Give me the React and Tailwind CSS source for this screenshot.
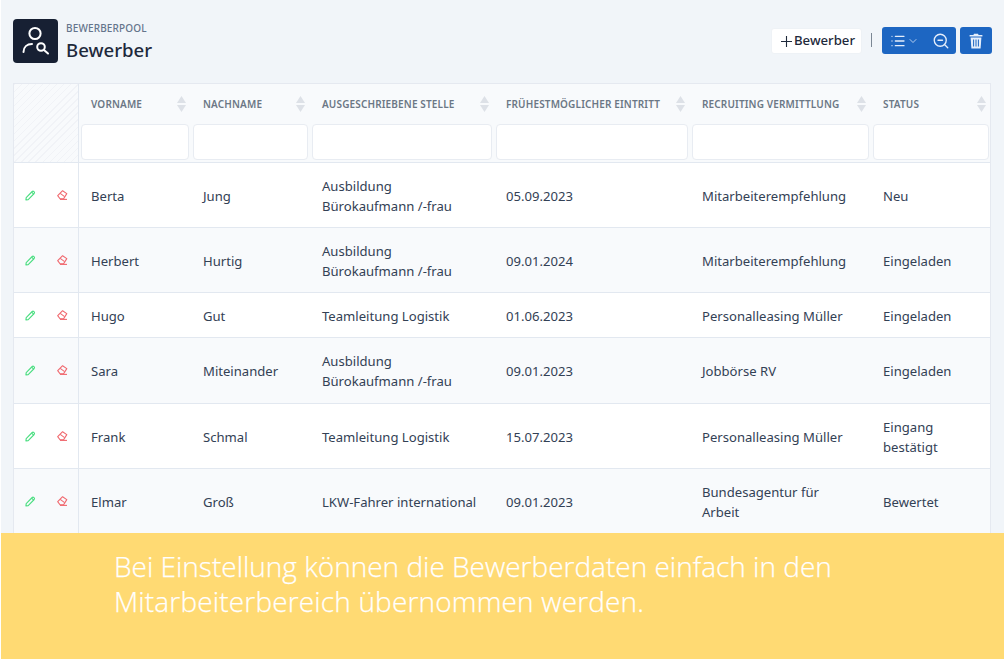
import React from "react";
import { List, ChevronDown, ZoomOut } from "lucide-react";

const cols = "grid grid-cols-[65px_112px_119px_184px_196px_181px_120px]";
const headers = ["VORNAME", "NACHNAME", "AUSGESCHRIEBENE STELLE", "FRÜHESTMÖGLICHER EINTRITT", "RECRUITING VERMITTLUNG", "STATUS"];
const rows = [
  { h: "h-[65px]", c: [["Berta"], ["Jung"], ["Ausbildung", "Bürokaufmann /-frau"], ["05.09.2023"], ["Mitarbeiterempfehlung"], ["Neu"]] },
  { h: "h-[65px]", alt: true, c: [["Herbert"], ["Hurtig"], ["Ausbildung", "Bürokaufmann /-frau"], ["09.01.2024"], ["Mitarbeiterempfehlung"], ["Eingeladen"]] },
  { h: "h-[45px]", c: [["Hugo"], ["Gut"], ["Teamleitung Logistik"], ["01.06.2023"], ["Personalleasing Müller"], ["Eingeladen"]] },
  { h: "h-[66px]", alt: true, c: [["Sara"], ["Miteinander"], ["Ausbildung", "Bürokaufmann /-frau"], ["09.01.2023"], ["Jobbörse RV"], ["Eingeladen"]] },
  { h: "h-[65px]", c: [["Frank"], ["Schmal"], ["Teamleitung Logistik"], ["15.07.2023"], ["Personalleasing Müller"], ["Eingang", "bestätigt"]] },
  { h: "h-[64px]", alt: true, c: [["Elmar"], ["Groß"], ["LKW-Fahrer international"], ["09.01.2023"], ["Bundesagentur für", "Arbeit"], ["Bewertet"]] },
];

const Sort = () => (
  <svg width="9" height="16" viewBox="0 0 9 16" className="shrink-0">
    <path d="M4.5 0 L9 7 H0 Z" fill="#dde1e7" />
    <path d="M4.5 16 L9 9 H0 Z" fill="#dde1e7" />
  </svg>
);

const PencilIcon = () => (
  <svg width="11" height="11" viewBox="0 0 11 11" fill="none" stroke="#4ade80" strokeWidth="1.1">
    <path d="M1.2 7.6 L7.2 1.5 Q8 .8 9 1.6 Q10 2.6 9.2 3.5 L3.2 9.6 L.9 10 Z" strokeLinejoin="round" />
    <path d="M6.6 2.2 L8.7 4.2" />
  </svg>
);

const EraserIcon = () => (
  <svg width="11" height="11" viewBox="0 0 11 11" fill="none" stroke="#f0696f" strokeWidth="1.1" strokeLinejoin="round">
    <path d="M.7 5.6 L5.6 .7 L9.8 3.6 L6.6 8.8 L3 8.8 Z" />
    <path d="M3.2 3.4 L7.6 6.6" />
    <path d="M3 9.4 H10" />
  </svg>
);

const UserSearch = () => (
  <svg width="30" height="30" viewBox="0 0 30 30" fill="none" stroke="white" strokeWidth="2" strokeLinecap="round">
    <circle cx="14" cy="7.5" r="5.6" />
    <path d="M2.5 26 C2.5 21 6 18 11 18" />
    <circle cx="20" cy="21" r="3.8" />
    <path d="M23 24 L27 27.5" />
  </svg>
);

const TrashIcon = () => (
  <svg width="14" height="16" viewBox="0 0 14 16">
    <path d="M5 0.7 H9 L9.6 2 H13.4 V3.6 H.6 V2 H4.4 Z" fill="#e5eefb" />
    <path d="M1.6 4.6 H12.4 L11.6 15.4 H2.4 Z" fill="#e5eefb" />
    <path d="M4.6 6.5 V13.5 M7 6.5 V13.5 M9.4 6.5 V13.5" stroke="#1d66c2" strokeWidth="1" />
  </svg>
);

export default function App() {
  return (
    <div className="w-[1004px] h-[661px] overflow-hidden bg-white font-['Noto_Sans','Open_Sans',sans-serif]">
      <div className="bg-[#f1f5f9] ml-px pt-[19px] pl-[12px] pr-[12px]">
        <div className="flex items-start h-[64px]">
          <div className="w-[45px] h-[44px] rounded-[4px] bg-[#172033] flex items-center justify-center">
            <UserSearch />
          </div>
          <div className="ml-[8px] flex flex-col">
            <div className="text-[10px] leading-[18px] font-medium text-[#64748b] tracking-[0.15px]">BEWERBERPOOL</div>
            <div className="text-[18.6px] leading-[26px] font-medium text-[#1e293b]">Bewerber</div>
          </div>
          <div className="ml-auto flex items-center mt-[8px]">
            <button className="h-[26px] w-[91px] mt-[1px] pl-[3px] bg-white rounded-[3px] text-[13.2px] font-medium text-[#1e293b] flex items-center justify-center border border-[#eef2f6]">
              <svg width="11" height="11" viewBox="0 0 11 11" stroke="#1e293b" strokeWidth="1.1" className="mr-[2px] mt-px"><path d="M5.5 0 V11 M0 5.5 H11" /></svg>
              Bewerber
            </button>
            <div className="w-px h-[14px] bg-[#7b8794] ml-[9px] mr-[10px] -mt-[1px]"></div>
            <div className="w-[74px] h-[27px] bg-[#1d66c2] rounded-[3px] flex items-center pl-[8px] text-[#e5eefb]">
              <List size={16} strokeWidth={1.9} />
              <ChevronDown size={12} strokeWidth={1.5} className="ml-[1px]" />
              <ZoomOut size={18} strokeWidth={1.8} className="ml-[13px]" />
            </div>
            <div className="w-[32px] h-[27px] bg-[#1d66c2] rounded-[3px] ml-[4px] flex items-center justify-center">
              <TrashIcon />
            </div>
          </div>
        </div>

        <div className="w-[978px] border-l border-r border-t border-[#e5e9f0] text-[13.1px] text-[#334155]">
          <div className={`${cols} h-[79px] bg-[#f8fafc] border-b border-[#e2e8f0]`}>
            <div className="border-r border-[#e2e8f0] bg-[repeating-linear-gradient(135deg,#f1f3f7_0,#f1f3f7_1px,#f8fafc_1px,#f8fafc_5px)]"></div>
            {headers.map((t) => (
              <div key={t} className="flex flex-col px-[2px]">
                <div className="h-[40px] flex items-center justify-between pl-[10px] pr-[3px]">
                  <span className="text-[10px] font-semibold text-[#6b7785] tracking-[0.15px] whitespace-nowrap">{t}</span>
                  <Sort />
                </div>
                <div className="h-[36px] bg-white border border-[#e8ecf2] rounded-[4px]"></div>
              </div>
            ))}
          </div>
          {rows.map((r, i) => (
            <div key={i} className={`${cols} ${r.h} ${r.alt ? "bg-[#f8fafc]" : "bg-white"} border-b border-[#e2e8f0] last:border-b-0`}>
              <div className="flex items-center border-r border-[#e2e8f0] pl-[11px]">
                <PencilIcon />
                <span className="ml-[21px]"><EraserIcon /></span>
              </div>
              {r.c.map((lines, j) => (
                <div key={j} className="flex flex-col justify-center pl-[12px] pt-[1px] leading-[20px] whitespace-nowrap">
                  {lines.map((l) => <div key={l}>{l}</div>)}
                </div>
              ))}
            </div>
          ))}
        </div>
      </div>

      <div className="ml-px h-[126px] bg-[#ffda73] pl-[113px] pt-[16px] text-white text-[28px] leading-[35px] font-light font-['Open_Sans',sans-serif] [-webkit-text-stroke:0.25px_white]">
        <div>Bei Einstellung können die Bewerberdaten einfach in den</div>
        <div className="tracking-[0.16px]">Mitarbeiterbereich übernommen werden.</div>
      </div>
    </div>
  );
}
